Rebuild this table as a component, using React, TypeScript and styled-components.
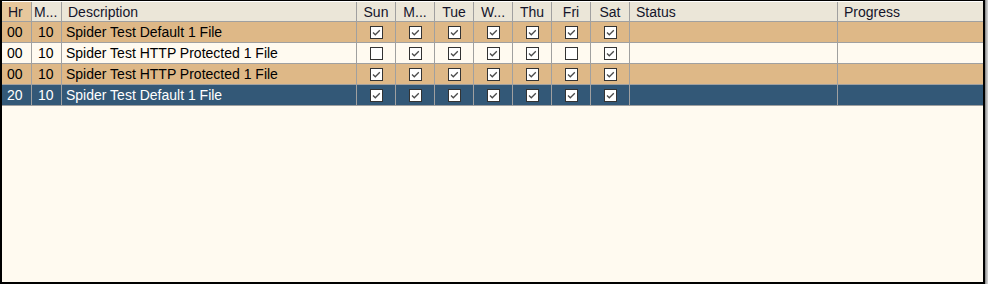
import React from "react";
import styled, { createGlobalStyle } from "styled-components";

const GlobalStyle = createGlobalStyle`
  html, body {
    margin: 0;
    padding: 0;
    background: #fffaf0;
  }
  body {
    font-family: "Liberation Sans", Arial, sans-serif;
  }
`;

const COLUMNS = "30px 30px 295px repeat(7, 39px) 208px 1fr";

const Window = styled.div`
  display: flex;
  width: 988px;
  height: 284px;
`;

const Frame = styled.div`
  box-sizing: border-box;
  width: 985px;
  height: 284px;
  border-left: 2px solid #000;
  border-right: 2px solid #000;
  border-top: 1px solid #000;
  border-bottom: 2px solid #000;
  background: #fffaf0;
  display: flex;
  flex-direction: column;
  overflow: hidden;
`;

const Edge = styled.div`
  width: 3px;
  height: 284px;
  background: linear-gradient(to right, #7d7d7d, #b4b4b4, #d6d6d6);
`;

const HeaderRow = styled.div`
  display: grid;
  grid-template-columns: ${COLUMNS};
  height: 20px;
  border-top: 1px solid #fff;
  background: #ebe6d8;
`;

const HeaderCell = styled.div<{ $center?: boolean; $sorted?: boolean; $last?: boolean }>`
  box-sizing: border-box;
  height: 20px;
  padding: 0 ${(p) => (p.$center ? "0" : "6px")};
  display: flex;
  align-items: center;
  justify-content: ${(p) => (p.$center ? "center" : "flex-start")};
  font-size: 14px;
  color: #14142a;
  white-space: nowrap;
  overflow: hidden;
  background: ${(p) => (p.$sorted ? "#e6c79c" : "transparent")};
  border-bottom: 1px solid #a0a0a0;
  border-right: ${(p) => (p.$last ? "none" : "1px solid #a0a0a0")};
`;

type RowKind = "tan" | "plain" | "selected";

const rowBg: Record<RowKind, string> = {
  tan: "#deb887",
  plain: "#fffaf0",
  selected: "#335877",
};

const Row = styled.div<{ $kind: RowKind }>`
  display: grid;
  grid-template-columns: ${COLUMNS};
  height: 21px;
  background: ${(p) => rowBg[p.$kind]};
  color: ${(p) => (p.$kind === "selected" ? "#fff" : "#000")};
`;

const Cell = styled.div<{ $center?: boolean; $pad?: number; $last?: boolean }>`
  box-sizing: border-box;
  height: 21px;
  padding-left: ${(p) => (p.$center ? 0 : p.$pad ?? 4)}px;
  display: flex;
  align-items: center;
  justify-content: ${(p) => (p.$center ? "center" : "flex-start")};
  font-size: 14px;
  white-space: nowrap;
  overflow: hidden;
  border-bottom: 1px solid #a0a0a0;
  border-right: ${(p) => (p.$last ? "none" : "1px solid #a0a0a0")};
`;

const Box = styled.span`
  box-sizing: border-box;
  width: 13px;
  height: 13px;
  border: 1px solid #333;
  background: #fff;
  display: flex;
  align-items: center;
  justify-content: center;
`;

const CheckBox: React.FC<{ checked: boolean }> = ({ checked }) => (
  <Box>
    {checked && (
      <svg width="11" height="11" viewBox="0 0 11 11">
        <polyline
          points="2,5.5 4.3,7.8 8.8,3.3"
          fill="none"
          stroke="#4a4a4a"
          strokeWidth="1.3"
        />
      </svg>
    )}
  </Box>
);

const days = ["Sun", "M...", "Tue", "W...", "Thu", "Fri", "Sat"];

type Schedule = {
  hr: string;
  min: string;
  description: string;
  days: boolean[];
  kind: RowKind;
};

const all = [true, true, true, true, true, true, true];

const schedules: Schedule[] = [
  { hr: "00", min: "10", description: "Spider Test Default 1 File", days: all, kind: "tan" },
  {
    hr: "00",
    min: "10",
    description: "Spider Test HTTP Protected 1 File",
    days: [false, true, true, true, true, false, true],
    kind: "plain",
  },
  { hr: "00", min: "10", description: "Spider Test HTTP Protected 1 File", days: all, kind: "tan" },
  { hr: "20", min: "10", description: "Spider Test Default 1 File", days: all, kind: "selected" },
];

export default function App() {
  return (
    <>
      <GlobalStyle />
      <Window>
        <Frame>
          <HeaderRow>
            <HeaderCell $sorted>Hr</HeaderCell>
            <HeaderCell style={{ paddingLeft: 2 }}>M...</HeaderCell>
            <HeaderCell>Description</HeaderCell>
            {days.map((d) => (
              <HeaderCell key={d} $center>
                {d}
              </HeaderCell>
            ))}
            <HeaderCell>Status</HeaderCell>
            <HeaderCell $last>Progress</HeaderCell>
          </HeaderRow>
          {schedules.map((s, i) => (
            <Row key={i} $kind={s.kind}>
              <Cell $pad={5}>{s.hr}</Cell>
              <Cell $pad={6}>{s.min}</Cell>
              <Cell>{s.description}</Cell>
              {s.days.map((on, d) => (
                <Cell key={d} $center>
                  <CheckBox checked={on} />
                </Cell>
              ))}
              <Cell />
              <Cell $last />
            </Row>
          ))}
        </Frame>
        <Edge />
      </Window>
    </>
  );
}
